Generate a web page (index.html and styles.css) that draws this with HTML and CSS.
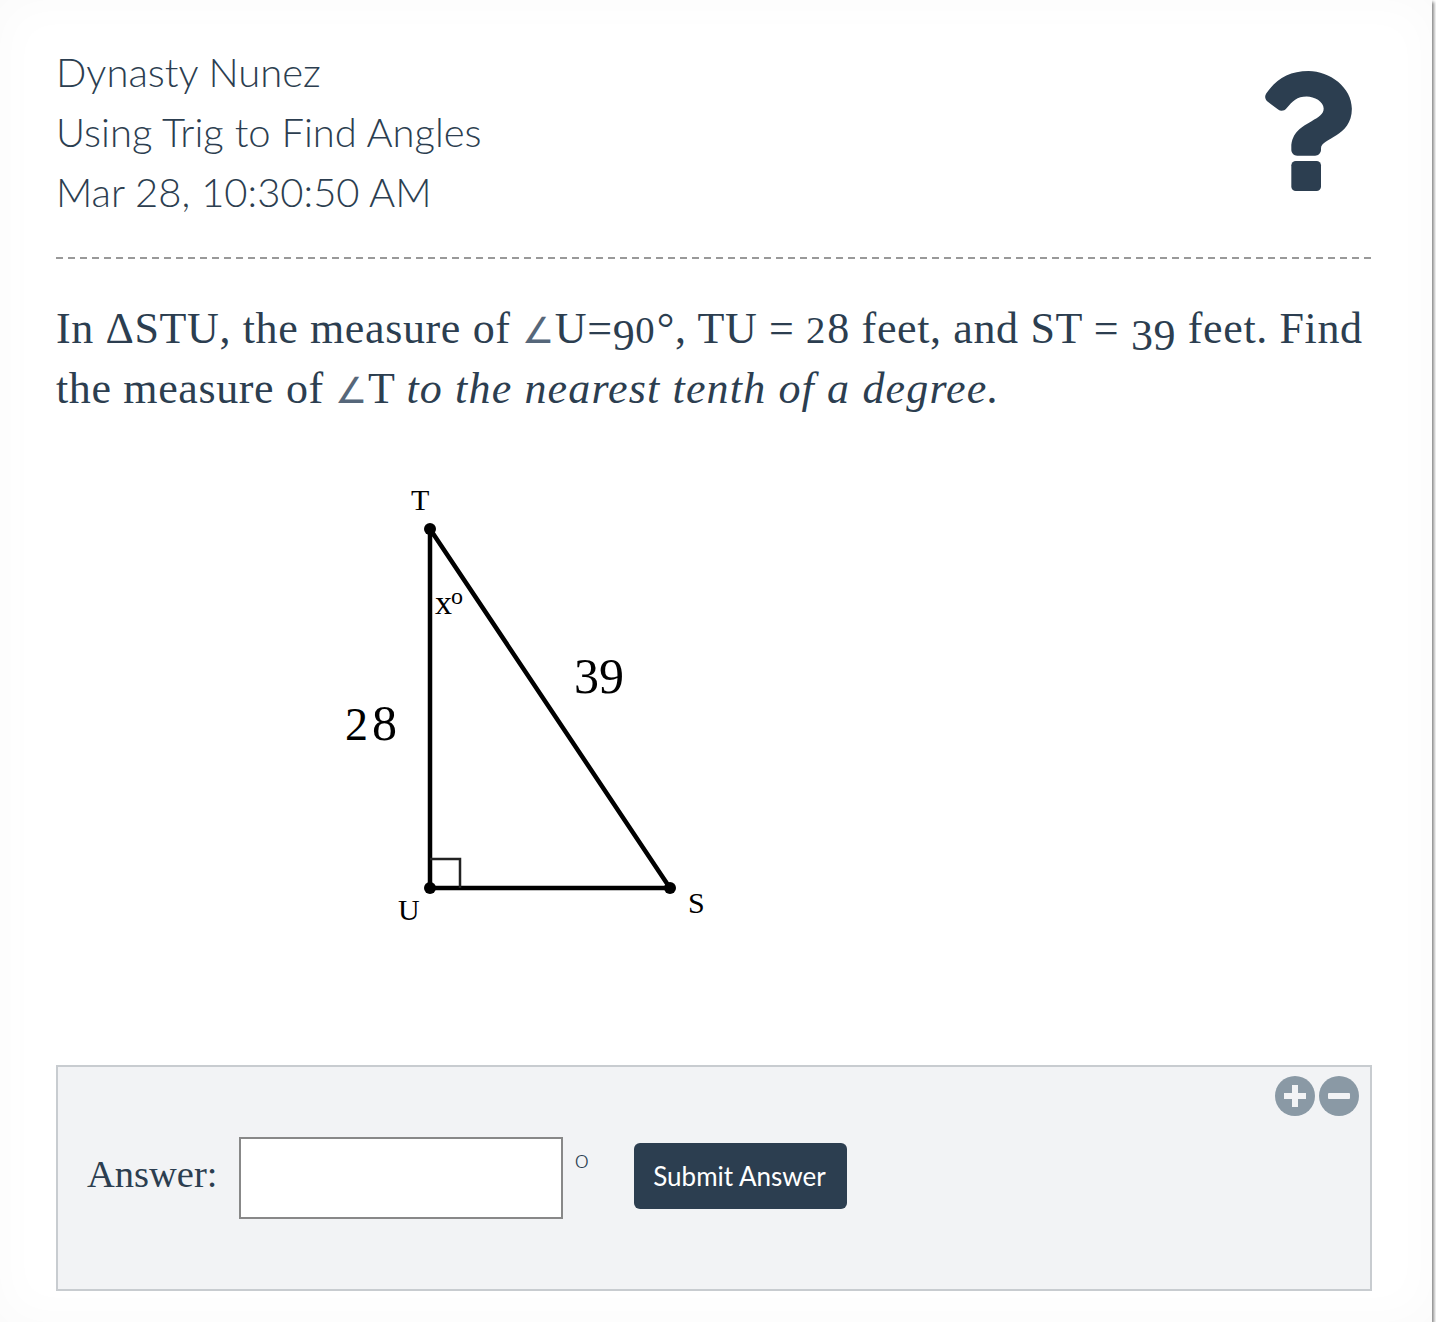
FILE: index.html
```html
<!DOCTYPE html>
<html lang="en">
<head>
  <meta charset="UTF-8" />
  <title>Using Trig to Find Angles</title>
  <link rel="stylesheet" href="styles.css">
</head>
<body>
  <div class="page">
    <div class="header">
      <div class="student-info">
        <div>Dynasty Nunez</div>
        <div>Using Trig to Find Angles</div>
        <div>Mar 28, 10:30:50 AM</div>
      </div>
      <svg class="help-icon" viewBox="25 0 353 487" aria-label="Help">
        <path d="M202.021 0C122.202 0 70.503 32.703 29.914 91.026c-7.363 10.58-5.093 25.086 5.178 32.874l43.138 32.709c10.373 7.865 25.132 6.026 33.253-4.148 25.049-31.381 43.63-49.449 82.757-49.449 30.764 0 68.816 19.799 68.816 49.631 0 22.552-18.617 34.134-48.993 51.164-35.423 19.86-82.299 44.576-82.299 106.405V320c0 13.255 10.745 24 24 24h72.471c13.255 0 24-10.745 24-24v-5.773c0-42.86 125.268-44.645 125.268-160.627C377.504 66.256 286.902 0 202.021 0z"/>
        <rect x="131.77" y="365" width="120.47" height="122" rx="18"/>
      </svg>
    </div>

    <div class="divider"></div>

    <div class="question">
      <div>In ΔSTU, the measure of <span class="angle">∠</span>U=<span class="drop">9</span><span class="small">0</span>°, TU = <span class="small">2</span>8 feet, and ST = <span class="drop">39</span> feet. Find</div>
      <div>the measure of <span class="angle">∠</span>T <em>to the nearest tenth of a degree.</em></div>
    </div>

    <svg class="diagram" viewBox="340 480 390 450" width="390" height="450">
      <path class="side" d="M430 529V888H670Z"/>
      <path class="right-angle" d="M430 859H460V888"/>
      <circle cx="430" cy="529" r="6"/>
      <circle cx="430" cy="888" r="6"/>
      <circle cx="670" cy="888" r="6"/>
      <text class="vertex" x="411" y="510">T</text>
      <text class="vertex" x="398" y="920">U</text>
      <text class="vertex" x="688" y="913">S</text>
      <text class="angle-x" x="435" y="614">x</text>
      <text class="degree-mark" x="451" y="604">o</text>
      <text class="side-label" x="345" y="740"><tspan font-size="46">2</tspan><tspan dx="4">8</tspan></text>
      <text class="side-label" x="574" y="693">39</text>
    </svg>

    <div class="answer-box">
      <div class="zoom-buttons">
        <svg class="zoom-icon" viewBox="0 0 40 40"><circle cx="20" cy="20" r="20"/><path d="M17 9h6v8h8v6h-8v8h-6v-8H9v-6h8z"/></svg>
        <svg class="zoom-icon" viewBox="0 0 40 40"><circle cx="20" cy="20" r="20"/><rect x="9" y="17" width="22" height="6" rx="1"/></svg>
      </div>
      <label class="answer-label" for="answer">Answer:</label>
      <input class="answer-input" id="answer" type="text">
      <span class="answer-unit">o</span>
      <button class="submit-btn">Submit Answer</button>
    </div>
  </div>
</body>
</html>
```

FILE: styles.css
```css
body {
  margin: 0;
  background: #fff;
  color: #2c3e50;
}
.page {
  box-sizing: border-box;
  width: 1432px;
  height: 1322px;
  padding: 42px 60px 0 56px;
  background: #fff;
  box-shadow: inset 0 0 50px rgba(0,0,0,0.025), 2px 2px 3px #888;
}
.header {
  display: flex;
  justify-content: space-between;
  align-items: flex-start;
}
.student-info {
  font-family: "Lato", sans-serif;
  font-weight: 300;
  font-size: 40px;
  line-height: 60px;
  color: #2c3e50;
}
.help-icon {
  width: 87px;
  height: 120px;
  margin: 29px 20px 0 0;
  fill: #2c3e50;
}
.divider {
  height: 2px;
  margin-top: 35px;
  background: repeating-linear-gradient(90deg, #999 0 7px, transparent 7px 12px);
}
.question {
  margin: 40px 0 0;
  font-family: "Liberation Serif", serif;
  font-size: 44px;
  line-height: 60px;
  letter-spacing: 0.63px;
}
.question em {
  letter-spacing: 1.15px;
}
.angle {
  font-family: "DejaVu Sans", sans-serif;
  font-size: 36px;
  font-weight: 200;
  line-height: 0;
  color: #56677a;
}
.small {
  font-size: 0.88em;
  line-height: 0;
  letter-spacing: 2px;
}
.drop {
  line-height: 0;
  vertical-align: -0.16em;
}
.diagram {
  display: block;
  margin: 61px 0 0 284px;
}
.side {
  fill: none;
  stroke: #000;
  stroke-width: 4.5;
  stroke-linejoin: round;
}
.right-angle {
  fill: none;
  stroke: #222;
  stroke-width: 2.5;
}
.vertex {
  font-family: "Liberation Serif", serif;
  font-size: 30px;
}
.angle-x {
  font-family: "Liberation Serif", serif;
  font-size: 34px;
}
.degree-mark {
  font-family: "Liberation Serif", serif;
  font-size: 24px;
}
.side-label {
  font-family: "Liberation Serif", serif;
  font-size: 50px;
}
.answer-box {
  position: relative;
  box-sizing: border-box;
  display: flex;
  align-items: flex-start;
  height: 226px;
  margin-top: 135px;
  padding: 70px 30px 0;
  background: #f2f3f5;
  border: 2px solid #c8ccd0;
}
.zoom-buttons {
  position: absolute;
  top: 9px;
  right: 11px;
  display: flex;
  gap: 4px;
}
.zoom-icon {
  width: 40px;
  height: 40px;
}
.zoom-icon circle {
  fill: #8a99a5;
}
.zoom-icon path, .zoom-icon rect {
  fill: #f2f3f5;
}
.answer-label {
  margin: 14px 22px 0 -1px;
  font-family: "Liberation Serif", serif;
  font-size: 38.5px;
  line-height: 46px;
}
.answer-input {
  box-sizing: border-box;
  width: 324px;
  height: 82px;
  padding: 0;
  background: #fff;
  border: 2px solid #888;
}
.answer-unit {
  margin: 6px 45px 0 11px;
  font-family: "Lato", sans-serif;
  font-weight: 300;
  font-size: 26px;
  line-height: 30px;
}
.submit-btn {
  width: 213px;
  height: 66px;
  margin-top: 6px;
  padding: 0 2px 0 0;
  background: #2c3e50;
  color: #fff;
  border: none;
  border-radius: 6px;
  font-family: "Lato", sans-serif;
  font-size: 26px;
}
```
